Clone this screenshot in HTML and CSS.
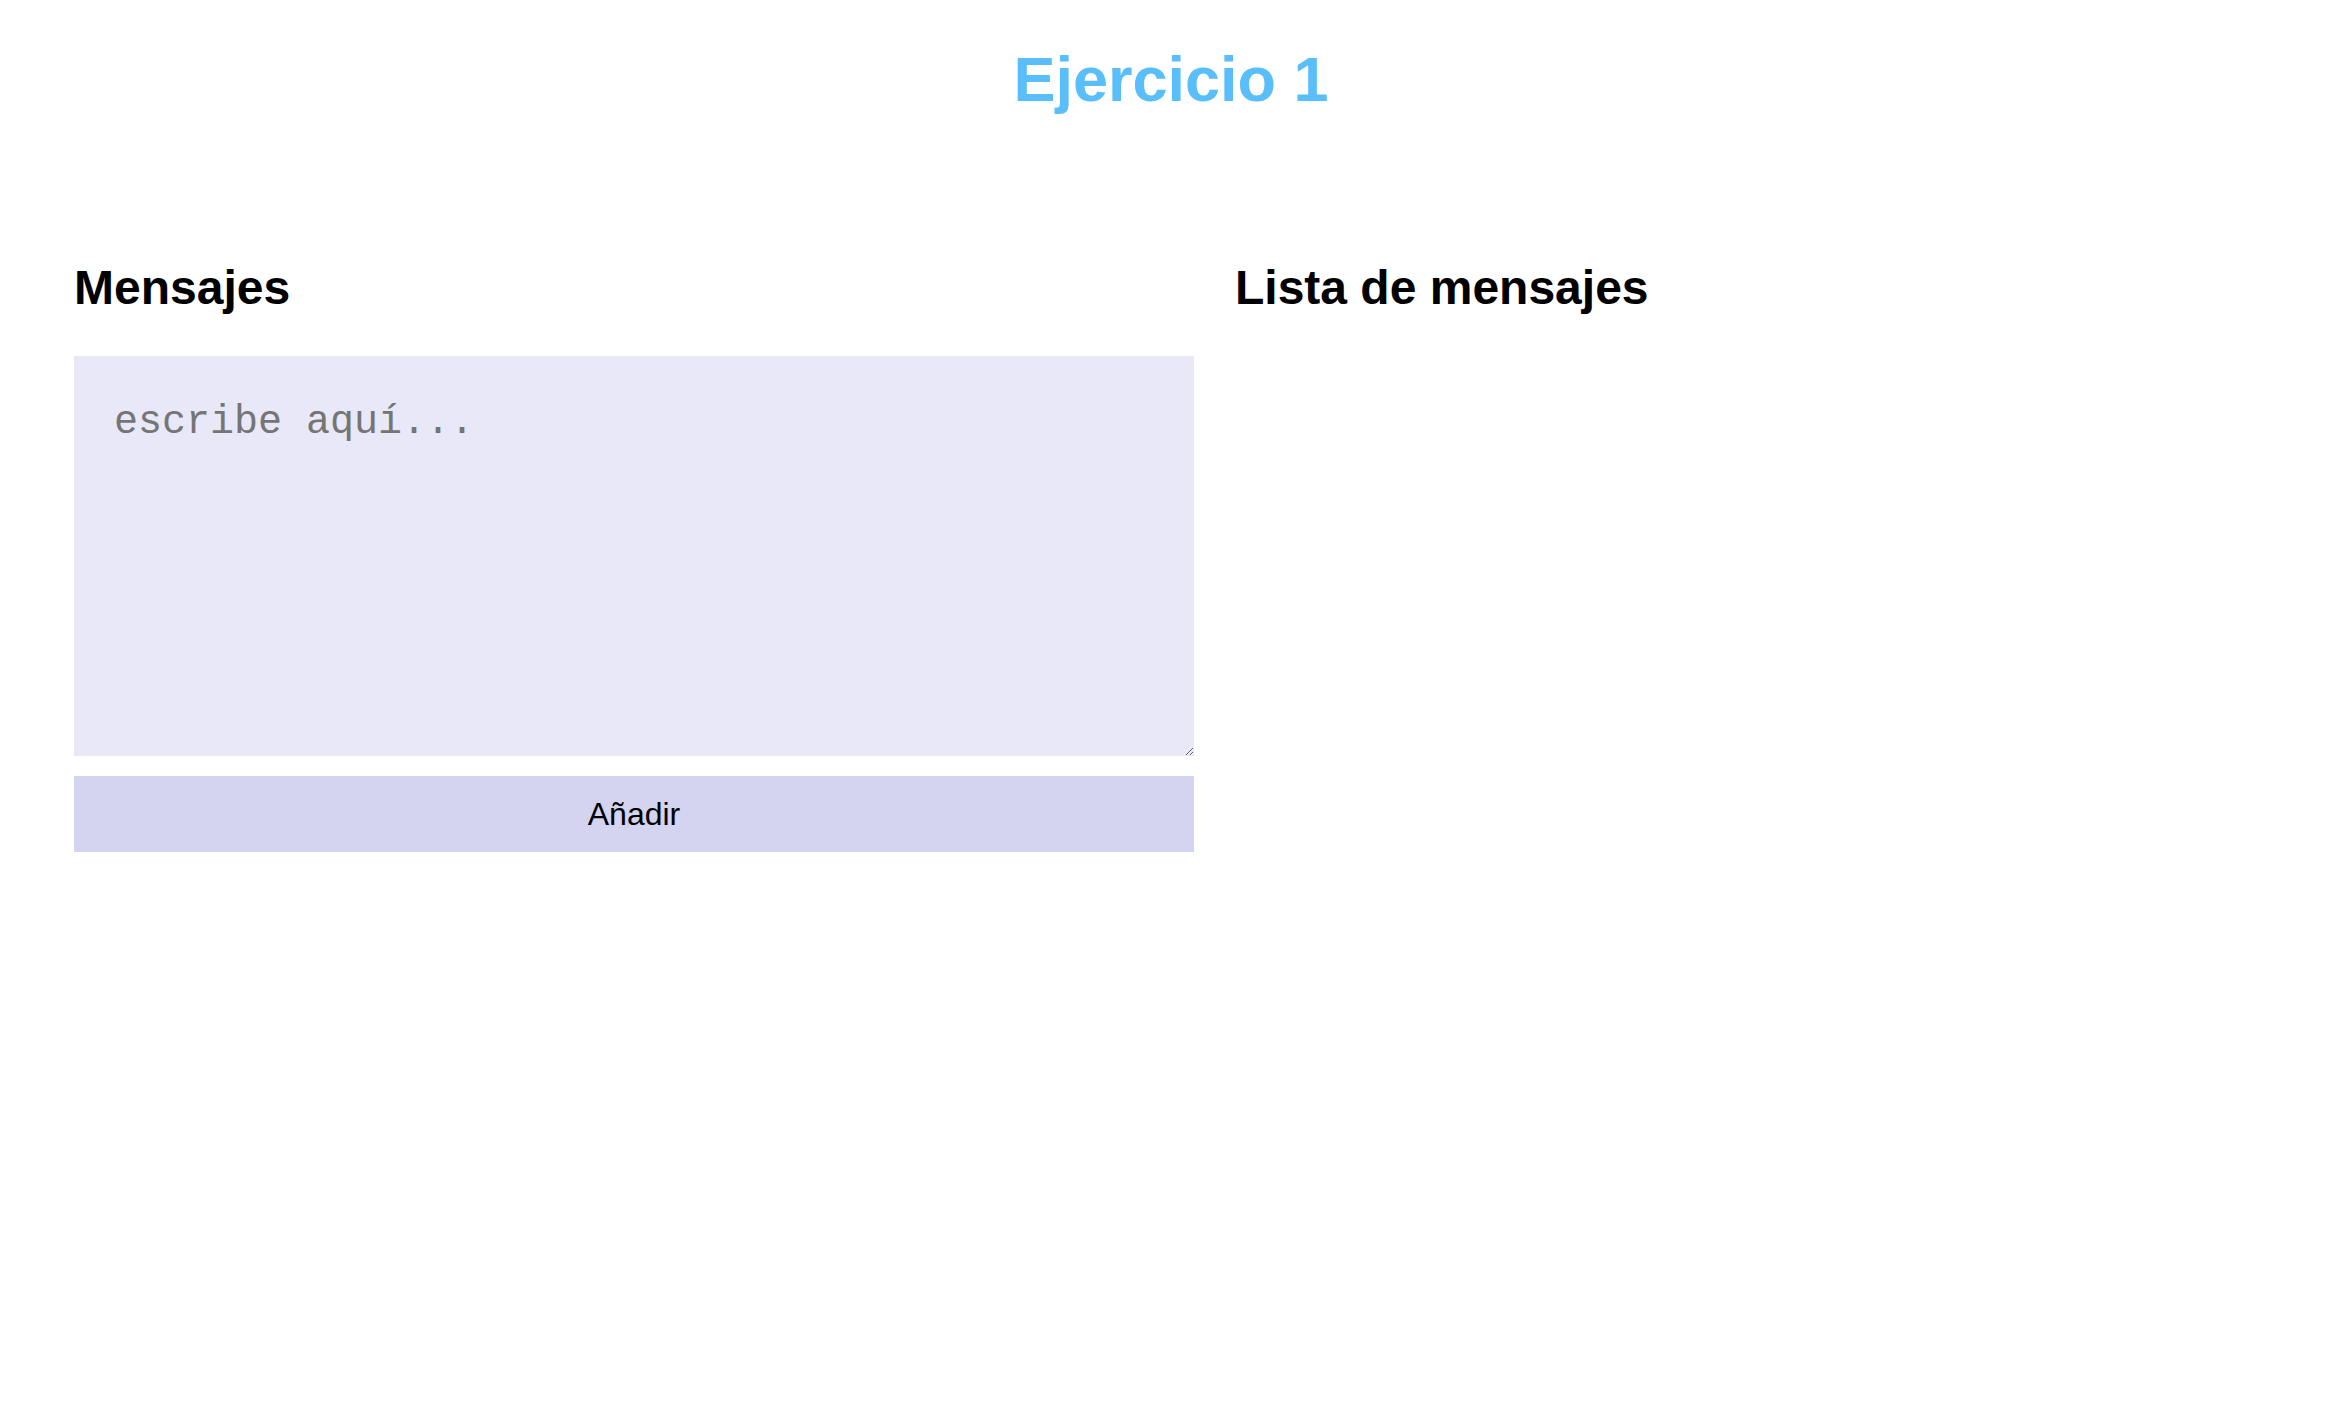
FILE: index.html
```html
<!DOCTYPE html>
<html lang="es">
<head>
<meta charset="utf-8">
<title>Ejercicio 1</title>
<link rel="stylesheet" href="styles.css">
</head>
<body>
<h1 class="title">Ejercicio 1</h1>
<main class="layout">
  <section class="col col-left">
    <h2 class="heading">Mensajes</h2>
    <textarea class="input" placeholder="escribe aquí..."></textarea>
    <button class="add-btn" type="button">Añadir</button>
  </section>
  <section class="col col-right">
    <h2 class="heading">Lista de mensajes</h2>
    <ul class="list"></ul>
  </section>
</main>
</body>
</html>
```
FILE: styles.css
```css
html, body {
  margin: 0;
  padding: 0;
  background: #ffffff;
}
body {
  font-family: "Liberation Sans", Arial, sans-serif;
  color: #000;
}
.title {
  margin: 42px 0 0;
  text-align: center;
  font-size: 63px;
  font-weight: bold;
  line-height: 74px;
  color: #5abefa;
}
.layout {
  display: flex;
  gap: 41px;
  padding: 144px 74px 0;
}
.col-left {
  width: 1120px;
  flex: 0 0 1120px;
  display: flex;
  flex-direction: column;
}
.col-right {
  flex: 1;
}
.heading {
  margin: 0 0 41px;
  font-size: 48px;
  font-weight: bold;
  line-height: 55px;
}
.input {
  display: block;
  box-sizing: border-box;
  width: 100%;
  height: 400px;
  margin: 0 0 20px;
  padding: 44px 40px 40px;
  border: none;
  outline: none;
  background: #e9e8f8;
  font-family: "Liberation Mono", "Courier New", monospace;
  font-size: 40px;
  color: #000;
  resize: both;
}
.input::placeholder {
  color: #757575;
}
.add-btn {
  display: block;
  width: 100%;
  height: 76px;
  border: none;
  padding: 0;
  margin: 0;
  background: #d4d4f1;
  font-family: "Liberation Sans", Arial, sans-serif;
  font-size: 32px;
  color: #000;
}
.list {
  margin: 0;
  padding: 0;
  list-style: none;
}
```
